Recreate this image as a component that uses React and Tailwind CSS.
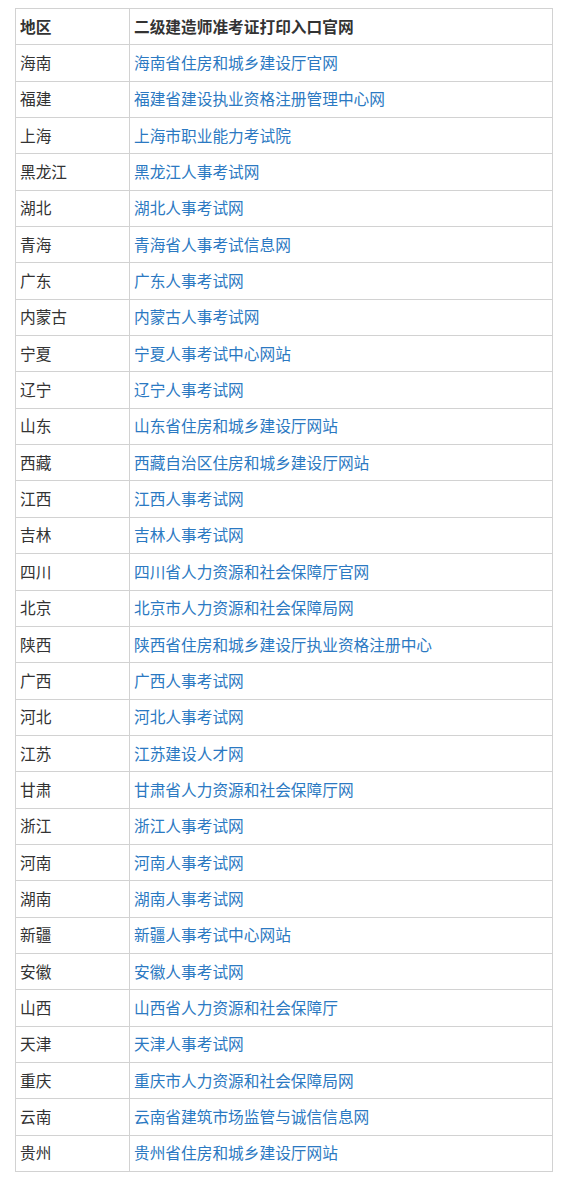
import React from "react";

const rows = [
  ["海南", "海南省住房和城乡建设厅官网"],
  ["福建", "福建省建设执业资格注册管理中心网"],
  ["上海", "上海市职业能力考试院"],
  ["黑龙江", "黑龙江人事考试网"],
  ["湖北", "湖北人事考试网"],
  ["青海", "青海省人事考试信息网"],
  ["广东", "广东人事考试网"],
  ["内蒙古", "内蒙古人事考试网"],
  ["宁夏", "宁夏人事考试中心网站"],
  ["辽宁", "辽宁人事考试网"],
  ["山东", "山东省住房和城乡建设厅网站"],
  ["西藏", "西藏自治区住房和城乡建设厅网站"],
  ["江西", "江西人事考试网"],
  ["吉林", "吉林人事考试网"],
  ["四川", "四川省人力资源和社会保障厅官网"],
  ["北京", "北京市人力资源和社会保障局网"],
  ["陕西", "陕西省住房和城乡建设厅执业资格注册中心"],
  ["广西", "广西人事考试网"],
  ["河北", "河北人事考试网"],
  ["江苏", "江苏建设人才网"],
  ["甘肃", "甘肃省人力资源和社会保障厅网"],
  ["浙江", "浙江人事考试网"],
  ["河南", "河南人事考试网"],
  ["湖南", "湖南人事考试网"],
  ["新疆", "新疆人事考试中心网站"],
  ["安徽", "安徽人事考试网"],
  ["山西", "山西省人力资源和社会保障厅"],
  ["天津", "天津人事考试网"],
  ["重庆", "重庆市人力资源和社会保障局网"],
  ["云南", "云南省建筑市场监管与诚信信息网"],
  ["贵州", "贵州省住房和城乡建设厅网站"],
];

export default function App() {
  return (
    <div
      className="w-[567px] h-[1188px] bg-white pt-[8px] pl-[15px]"
      style={{ fontFamily: '"Noto Sans CJK SC", "Noto Sans", sans-serif' }}
    >
      <table className="border-collapse table-fixed w-[538px] text-[15.7px] leading-[20px]">
        <colgroup>
          <col className="w-[114px]" />
          <col />
        </colgroup>
        <thead>
          <tr className="h-[36.35px]">
            <th className="border border-[#d2d2d2] pl-[4px] pr-[5px] text-left font-bold text-[#333]">地区</th>
            <th className="border border-[#d2d2d2] pl-[4px] pr-[5px] text-left font-bold text-[#333]">二级建造师准考证打印入口官网</th>
          </tr>
        </thead>
        <tbody>
          {rows.map(([a, b]) => (
            <tr key={a} className="h-[36.35px]">
              <td className="border border-[#d2d2d2] pl-[4px] pr-[5px] text-[#333]">{a}</td>
              <td className="border border-[#d2d2d2] pl-[4px] pr-[5px] text-[#2b79c2]">{b}</td>
            </tr>
          ))}
        </tbody>
      </table>
    </div>
  );
}
